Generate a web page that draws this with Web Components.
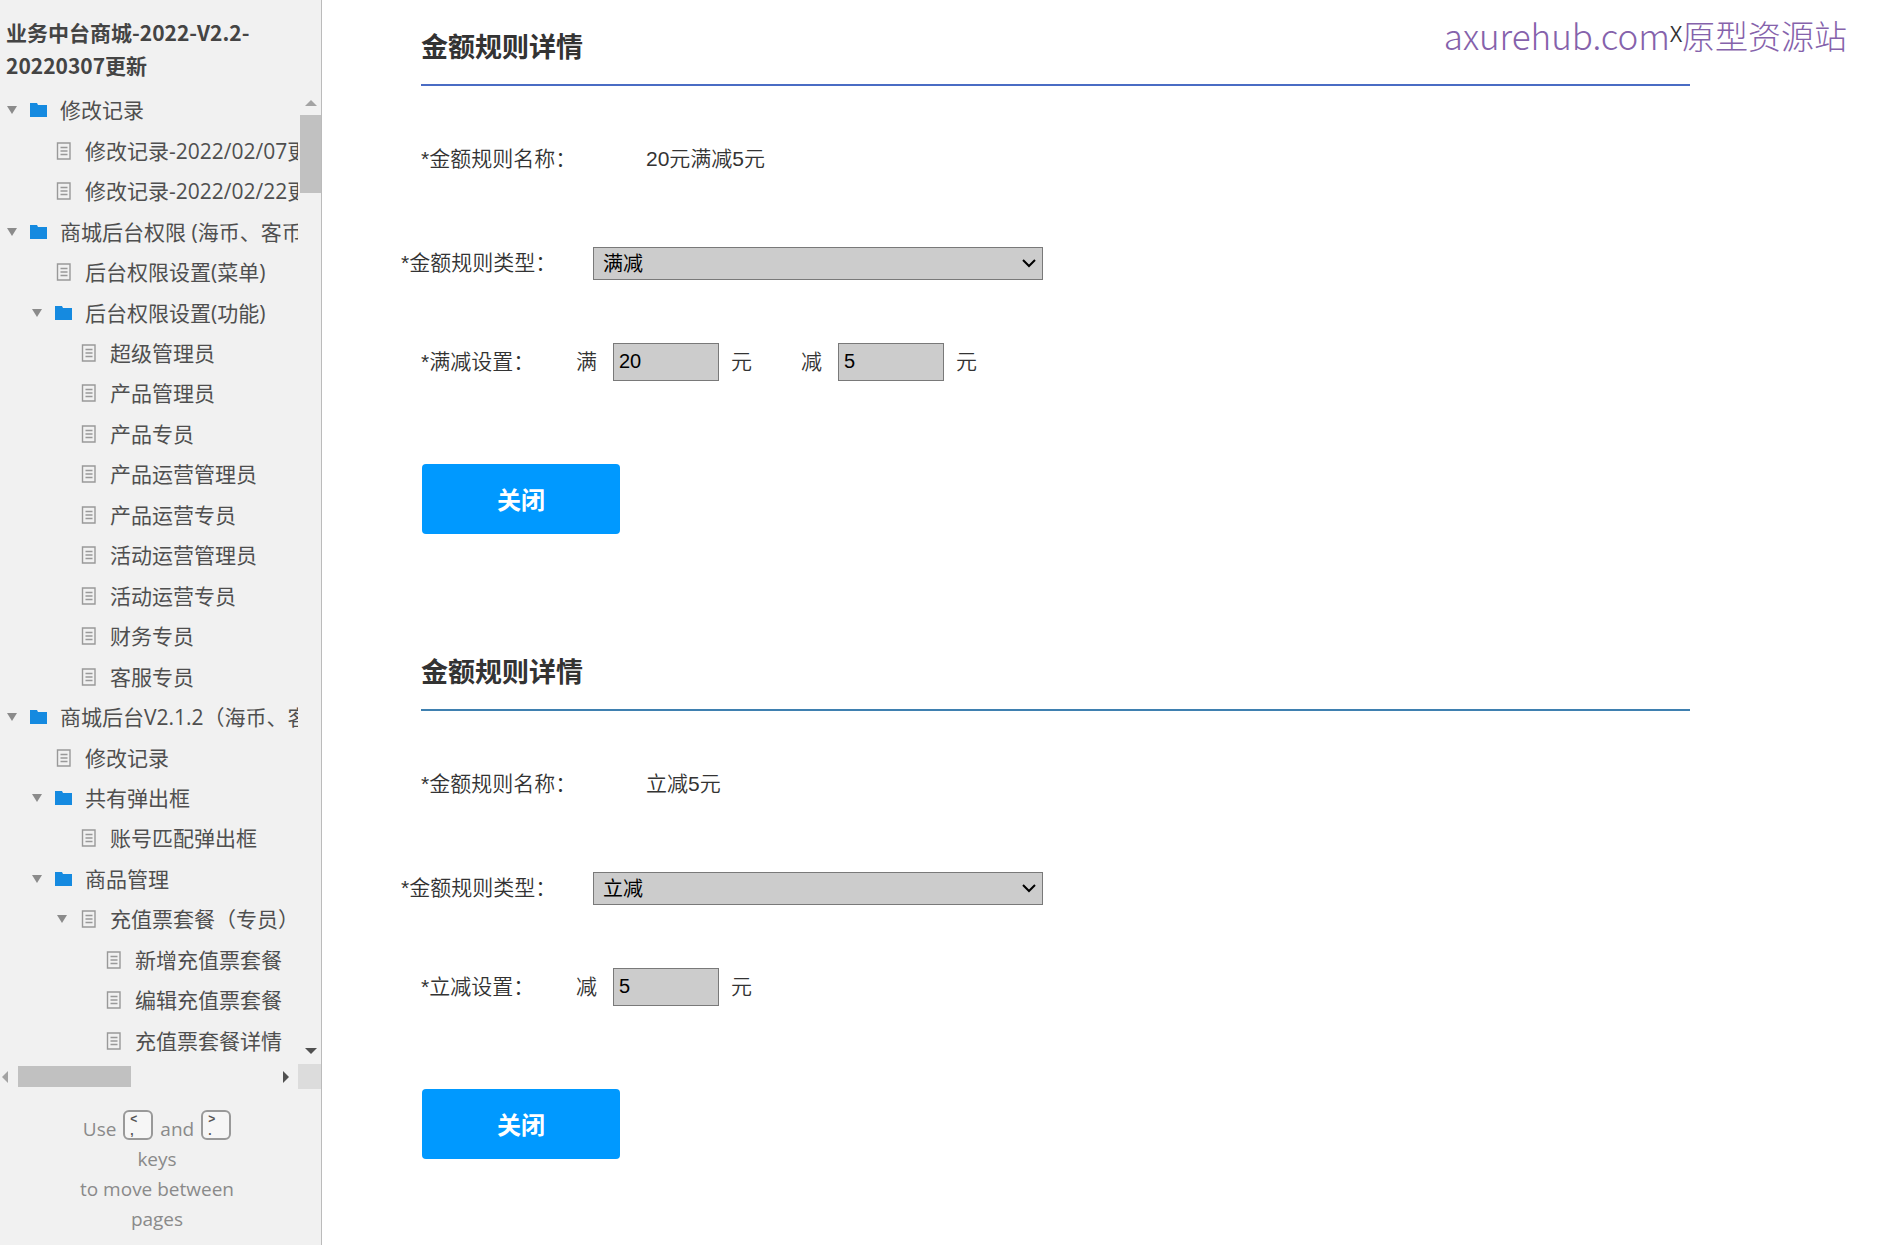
<!DOCTYPE html>
<html lang="zh-CN">
<head>
<meta charset="utf-8">
<title>业务中台商城-2022-V2.2-20220307更新</title>
<style>
    html, body{
        height: 100%;
        margin: 0;
    }
    body{
        background: #fff;
        color: #333;
        font-family: "Liberation Sans", "Noto Sans CJK SC", sans-serif;
        font-size: 21px;
        font-weight: 350;
    }
    .full{
        --rule-line: #4a6cc4;
    }
    .direct{
        --rule-line: #3f80b0;
    }
</style>
</head>
<body>

<prototype-app>
    <page-sidebar slot="sidebar" project="业务中台商城-2022-V2.2-20220307更新"></page-sidebar>
    <rule-detail class="full" name="20元满减5元" type="满减" fields="满:20,减:5"></rule-detail>
    <rule-detail class="direct" name="立减5元" type="立减" fields="减:5"></rule-detail>
    <site-mark slot="mark"></site-mark>
</prototype-app>

<script>
// level, kind, title, open (has children)
const PAGES = [
    [0, 'folder', '修改记录', true],
    [1, 'page', '修改记录-2022/02/07更新'],
    [1, 'page', '修改记录-2022/02/22更新'],
    [0, 'folder', '商城后台权限 (海币、客币)', true],
    [1, 'page', '后台权限设置(菜单)'],
    [1, 'folder', '后台权限设置(功能)', true],
    [2, 'page', '超级管理员'],
    [2, 'page', '产品管理员'],
    [2, 'page', '产品专员'],
    [2, 'page', '产品运营管理员'],
    [2, 'page', '产品运营专员'],
    [2, 'page', '活动运营管理员'],
    [2, 'page', '活动运营专员'],
    [2, 'page', '财务专员'],
    [2, 'page', '客服专员'],
    [0, 'folder', '商城后台V2.1.2（海币、客币）', true],
    [1, 'page', '修改记录'],
    [1, 'folder', '共有弹出框', true],
    [2, 'page', '账号匹配弹出框'],
    [1, 'folder', '商品管理', true],
    [2, 'page', '充值票套餐（专员）', true],
    [3, 'page', '新增充值票套餐'],
    [3, 'page', '编辑充值票套餐'],
    [3, 'page', '充值票套餐详情']
];

const ICONS = {
    folder: `<svg width="18" height="16" viewBox="0 0 18 16"><path d="M0 1h7l1 2h9v12H0z" fill="#158ae0"/></svg>`,
    page: `<svg width="18" height="18" viewBox="0 0 18 18" fill="none" stroke="#999">
        <path d="M2.5 1h12.5v16H2.5z" stroke-width="1.4"/>
        <path d="M5.5 5.5h7M5.5 9h7M5.5 12.5h7" stroke-width="1.4"/></svg>`,
    caret: `<svg width="10" height="8" viewBox="0 0 10 8"><path d="M0 0h10L5 8z" fill="#8b8b8b"/></svg>`
};

class PrototypeApp extends HTMLElement{
    constructor(){
        super()
        this.attachShadow({mode: 'open'})
    }

    connectedCallback(){
        this.shadowRoot.innerHTML = `<style>
            :host{
                display: flex;
                position: relative;
                min-height: 100%;
            }
            main{
                flex: 1;
                min-width: 0;
            }
        </style>
        <slot name="sidebar"></slot>
        <main><slot></slot></main>
        <slot name="mark"></slot>`;
    }
}

class TreeItem extends HTMLElement{
    constructor(){
        super()
        this.attachShadow({mode: 'open'})
    }

    connectedCallback(){
        const level = Number(this.getAttribute('level'));
        const kind = this.getAttribute('kind');

        this.shadowRoot.innerHTML = `<style>
            :host{
                display: flex;
                align-items: center;
                padding-left: ${7 + level * 25}px;
                white-space: nowrap;
            }
            .caret{
                display: flex;
                width: 10px;
                margin-right: 13px;
            }
            .icon{
                display: flex;
                width: 18px;
                margin-right: 12px;
            }
            a{
                color: inherit;
                text-decoration: none;
                line-height: 30px;
            }
        </style>
        <span class="caret">${this.hasAttribute('open') ? ICONS.caret : ''}</span>
        <span class="icon">${ICONS[kind]}</span>
        <a href="#"><slot></slot></a>`;
    }
}

class PageSidebar extends HTMLElement{
    constructor(){
        super()
        this.attachShadow({mode: 'open'})
    }

    renderItems(){
        return PAGES.map(([level, kind, title, open]) =>
            `<tree-item level="${level}" kind="${kind}" ${open ? 'open' : ''}>${title}</tree-item>`
        ).join('');
    }

    connectedCallback(){
        this.shadowRoot.innerHTML = `<style>
            :host{
                display: flex;
                flex-direction: column;
                box-sizing: border-box;
                width: 322px;
                flex: none;
                background: #f1f1f1;
                border-right: 1px solid #bbb;
                color: #4f4f4f;
                font-family: "Open Sans", "Noto Sans CJK SC", sans-serif;
                font-weight: 400;
            }
            h1{
                margin: 0;
                padding: 16px 40px 7px 6px;
                color: #444;
                font-family: "Noto Sans CJK SC", sans-serif;
                font-size: 21px;
                line-height: 33px;
            }
            .body{
                flex: 1;
                display: grid;
                grid-template-columns: 1fr 23px;
                grid-template-rows: 1fr 25px;
            }
            nav{
                display: grid;
                grid-auto-rows: 1fr;
                min-width: 0;
                overflow: hidden;
                padding: 1px 0 3px;
            }
            .bar{
                display: flex;
                align-items: center;
            }
            .vertical{
                flex-direction: column;
                padding: 11px 0 10px 2px;
            }
            .vertical .thumb{
                width: 21px;
                height: 78px;
                margin: 9px 0 auto;
            }
            .horizontal{
                padding: 0 9px 0 2px;
            }
            .horizontal .thumb{
                width: 113px;
                height: 21px;
                margin: 0 auto 0 10px;
            }
            .thumb{
                background: #c1c1c1;
            }
            .corner{
                background: #dcdcdc;
            }
            svg{
                display: block;
            }
        </style>
        <h1>${this.getAttribute('project')}</h1>
        <div class="body">
            <nav>${this.renderItems()}</nav>
            <div class="bar vertical">
                <svg width="12" height="6"><path d="M0 6h12L6 0z" fill="#a3a3a3"/></svg>
                <div class="thumb"></div>
                <svg width="12" height="6"><path d="M0 0h12L6 6z" fill="#505050"/></svg>
            </div>
            <div class="bar horizontal">
                <svg width="6" height="12"><path d="M6 0v12L0 6z" fill="#a3a3a3"/></svg>
                <div class="thumb"></div>
                <svg width="6" height="12"><path d="M0 0v12l6-6z" fill="#505050"/></svg>
            </div>
            <div class="corner"></div>
        </div>
        <key-hint></key-hint>`;
    }
}

class KeyHint extends HTMLElement{
    constructor(){
        super()
        this.attachShadow({mode: 'open'})
    }

    connectedCallback(){
        this.shadowRoot.innerHTML = `<style>
            :host{
                display: flex;
                flex-direction: column;
                align-items: center;
                padding: 21px 7px 16px 0;
                color: #8a8a8a;
                font-size: 19px;
                line-height: 30px;
            }
            .keys{
                display: flex;
                align-items: flex-start;
                gap: 7px;
            }
            .keys span{
                padding-top: 4px;
            }
            kbd{
                box-sizing: border-box;
                width: 30px;
                height: 30px;
                padding: 1px 0 0 5px;
                border: 2px solid #999;
                border-radius: 6px;
                background: #f6f6f6;
                color: #555;
                font: bold 12px/12px "Liberation Sans", sans-serif;
            }
        </style>
        <div class="keys"><span>Use</span><kbd>&lt;<br>,</kbd><span>and</span><kbd>&gt;<br>.</kbd></div>
        <div>keys</div>
        <div>to move between</div>
        <div>pages</div>`;
    }
}

class FieldRow extends HTMLElement{
    constructor(){
        super()
        this.attachShadow({mode: 'open'})
    }

    connectedCallback(){
        this.shadowRoot.innerHTML = `<style>
            :host{
                display: flex;
                align-items: center;
                height: 40px;
                line-height: 30px;
            }
            .label{
                flex: none;
                width: var(--label-width, 155px);
            }
        </style>
        <span class="label"><slot name="label"></slot></span>
        <slot></slot>`;
    }
}

class ActionButton extends HTMLElement{
    constructor(){
        super()
        this.attachShadow({mode: 'open'})
    }

    connectedCallback(){
        this.shadowRoot.innerHTML = `<style>
            :host{
                display: block;
            }
            button{
                display: block;
                width: 198px;
                height: 70px;
                padding: 0 0 2px;
                border: 0;
                border-radius: 4px;
                background: #09f;
                color: #fff;
                font: bold 24px "Noto Sans CJK SC", sans-serif;
                cursor: pointer;
            }
        </style>
        <button type="button"><slot></slot></button>`;
    }
}

class RuleDetail extends HTMLElement{
    constructor(){
        super()
        this.attachShadow({mode: 'open'})
    }

    renderAmounts(){
        return this.getAttribute('fields').split(',').map((f, i) => {
            const [label, value] = f.split(':');
            return `<span class="amount">
                <label for="amount${i}">${label}</label>
                <input id="amount${i}" type="text" value="${value}" disabled>
                <span>元</span>
            </span>`;
        }).join('');
    }

    connectedCallback(){
        const type = this.getAttribute('type');

        this.shadowRoot.innerHTML = `<style>
            :host{
                display: block;
                padding: 0 203px 91px 99px;
            }
            h2{
                margin: 0 0 53px;
                padding: 28px 0 16px;
                border-bottom: 2px solid var(--rule-line);
                font-size: 27px;
                line-height: 40px;
            }
            .name{
                --label-width: 225px;
                margin-bottom: 64px;
            }
            .type{
                --label-width: 192px;
                margin: 0 0 59px -20px;
            }
            .amounts{
                display: flex;
                gap: 49px;
            }
            .amount{
                display: flex;
                align-items: center;
            }
            select, input{
                box-sizing: border-box;
                margin: 0;
                border: 1px solid #797979;
                border-radius: 0;
                background: #ccc;
                color: #000;
                opacity: 1;
                font-family: inherit;
                font-size: 20px;
            }
            input{
                width: 106px;
                height: 38px;
                margin: 0 12px 0 16px;
                padding: 0 5px 2px;
            }
            .select{
                display: grid;
                align-items: center;
                width: 450px;
            }
            .select > *{
                grid-area: 1 / 1;
            }
            select{
                appearance: none;
                width: 100%;
                height: 33px;
                padding: 2px 9px 0;
            }
            .select svg{
                justify-self: end;
                margin-right: 7px;
                pointer-events: none;
            }
            action-button{
                margin: 82px 0 0 1px;
            }
        </style>
        <h2>金额规则详情</h2>
        <field-row class="name">
            <span slot="label">*金额规则名称：</span>
            <span>${this.getAttribute('name')}</span>
        </field-row>
        <field-row class="type">
            <label slot="label" for="type">*金额规则类型：</label>
            <span class="select">
                <select id="type" disabled><option>${type}</option></select>
                <svg width="14" height="9" viewBox="0 0 14 9"><path d="M1 1l6 6 6-6" fill="none" stroke="#000" stroke-width="2"/></svg>
            </span>
        </field-row>
        <field-row>
            <span slot="label">*${type}设置：</span>
            <span class="amounts">${this.renderAmounts()}</span>
        </field-row>
        <action-button>关闭</action-button>`;
    }
}

class SiteMark extends HTMLElement{
    constructor(){
        super()
        this.attachShadow({mode: 'open'})
    }

    connectedCallback(){
        // floats over the page, top right
        this.shadowRoot.innerHTML = `<style>
            :host{
                position: absolute;
                top: 11px;
                right: 46px;
                display: flex;
                font: 300 33px/48px "Noto Sans CJK SC", sans-serif;
            }
            a{
                color: #8562ab;
                text-decoration: none;
            }
            .domain{
                font-size: 35px;
            }
            button{
                width: 12px;
                height: 46px;
                padding: 0;
                border: 0;
                background: none;
                color: #333;
                font: 21px/46px "Open Sans", sans-serif;
            }
        </style>
        <a class="domain" href="#">axurehub.com</a><button type="button">X</button><a href="#">原型资源站</a>`;
    }
}

customElements.define('prototype-app', PrototypeApp)
customElements.define('tree-item', TreeItem)
customElements.define('key-hint', KeyHint)
customElements.define('page-sidebar', PageSidebar)
customElements.define('field-row', FieldRow)
customElements.define('action-button', ActionButton)
customElements.define('rule-detail', RuleDetail)
customElements.define('site-mark', SiteMark)
</script>
</body>
</html>
